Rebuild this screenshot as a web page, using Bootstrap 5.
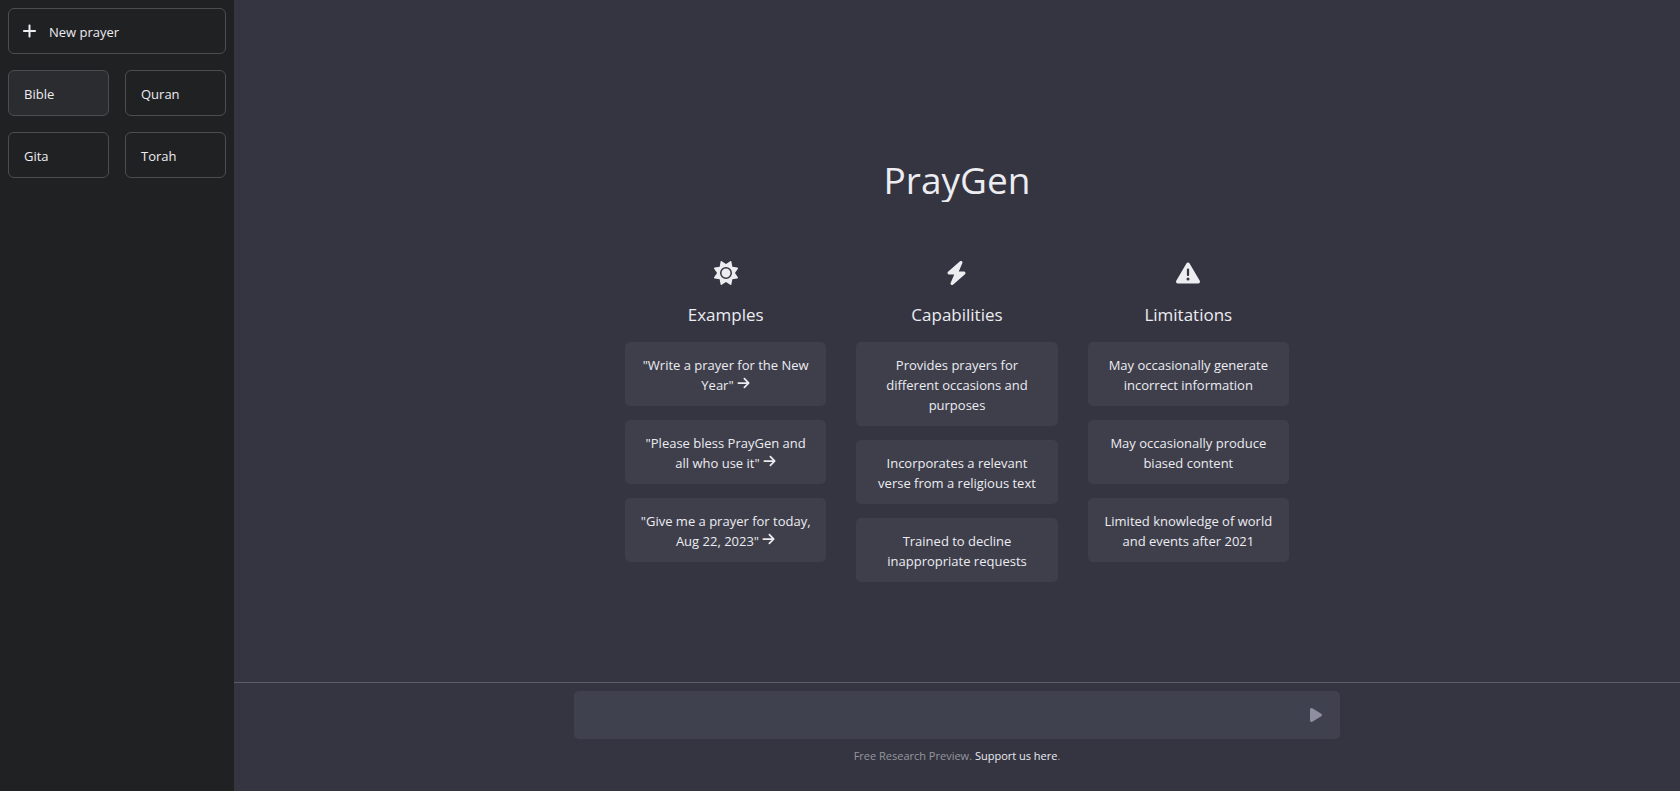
<!DOCTYPE html>
<html lang="en">
<head>
<meta charset="utf-8">
<meta name="viewport" content="width=device-width, initial-scale=1">
<title>PrayGen</title>
<link href="https://cdn.jsdelivr.net/npm/bootstrap@5.3.0/dist/css/bootstrap.min.css" rel="stylesheet">
<style>
  body { background: #343541; color: #ececf1; font-family: "Segoe UI", "Open Sans", sans-serif; font-size: 13px; line-height: 20px; }
  .sidebar { width: 234px; background: #202123; }
  .side-btn { --bs-btn-color: #ececf1; --bs-btn-border-color: #4d4d4f; --bs-btn-hover-color: #fff; --bs-btn-hover-bg: #2a2b32; --bs-btn-hover-border-color: #4d4d4f; --bs-btn-active-color: #ececf1; --bs-btn-active-bg: #2b2c30; --bs-btn-active-border-color: #4d4d4f; --bs-btn-border-radius: 6px; --bs-btn-font-size: 13px; --bs-btn-line-height: 20px; --bs-btn-padding-x: 15px; padding-top: 13px; padding-bottom: 11px; text-align: left; }
  .side-grid { display: grid; grid-template-columns: 1fr 1fr; gap: 16px; }
  .new-prayer { --bs-btn-padding-x: 14px; grid-column: span 2; gap: 13px; }
  .new-prayer svg { margin-bottom: 2px; }
  .welcome { max-width: 664px; padding-top: 162px; }
  .brand-title { font-size: 37px; height: 40px; line-height: 36px; margin-bottom: 59px; overflow: hidden; font-weight: 400; }
  .topics { display: grid; grid-template-columns: repeat(3, 1fr); gap: 30px; }
  .topic-title { font-size: 17px; line-height: 28px; font-weight: 400; margin: 16px 0 13px; }
  .tile { background: #3e3f4b; color: #ececf1; border: 0; border-radius: 5px; padding: 13px 14px 11px; text-align: center; }
  .tile svg { vertical-align: baseline; }
  .tile-stack { display: grid; gap: 14px; }
  .composer { border-top: 1px solid #5c5d67; padding: 8px 16px 10px; }
  .prompt-box { max-width: 766px; }
  .prompt-box .form-control { height: 48px; background: #40414f; border: 0; border-radius: 5px; color: #fff; padding: 12px 48px 12px 16px; }
  .send-btn { color: #8e8ea0; }
  .fine-print { font-size: 11px; line-height: 18px; color: #95959f; }
  .fine-print a { color: #ececf1; }
  svg { fill: currentColor; }
</style>
</head>
<body>
<div class="d-flex min-vh-100">
  <nav class="sidebar flex-shrink-0 p-2" aria-label="Prayers">
    <div class="side-grid">
      <button type="button" class="btn side-btn new-prayer d-flex align-items-center">
        <svg width="13" height="14" viewBox="16 36 416 440" aria-hidden="true"><path d="M256 80c0-17.700-14.300-32-32-32s-32 14.300-32 32V224H48c-17.700 0-32 14.300-32 32s14.300 32 32 32H192V432c0 17.700 14.300 32 32 32s32-14.300 32-32V288H400c17.700 0 32-14.300 32-32s-14.300-32-32-32H256V80z"/></svg>
        New prayer
      </button>
      <button type="button" class="btn side-btn active">Bible</button>
      <button type="button" class="btn side-btn">Quran</button>
      <button type="button" class="btn side-btn">Gita</button>
      <button type="button" class="btn side-btn">Torah</button>
    </div>
  </nav>

  <main class="flex-grow-1 d-flex flex-column">
    <section class="welcome flex-grow-1 w-100 mx-auto text-center">
      <h1 class="brand-title">PrayGen</h1>
      <div class="topics">
        <div>
          <svg class="d-block mx-auto" width="24" height="24" viewBox="0 0 512 512" aria-hidden="true"><path d="M361.5 1.200c5 2.100 8.600 6.600 9.600 11.900L391 121l107.900 19.800c5.300 1 9.800 4.600 11.900 9.600s1.500 10.700-1.600 15.200L446.900 256l62.300 90.300c3.100 4.500 3.700 10.200 1.600 15.200s-6.600 8.600-11.900 9.600L391 391 371.100 498.900c-1 5.300-4.600 9.800-9.600 11.900s-10.700 1.500-15.200-1.600L256 446.900l-90.300 62.300c-4.500 3.100-10.200 3.700-15.200 1.600s-8.600-6.600-9.600-11.900L121 391 13.100 371.100c-5.300-1-9.800-4.600-11.900-9.600s-1.500-10.700 1.600-15.200L65.100 256 2.800 165.700c-3.100-4.500-3.700-10.200-1.600-15.200s6.600-8.600 11.900-9.600L121 121 140.900 13.100c1-5.300 4.600-9.800 9.600-11.900s10.700-1.500 15.200 1.600L256 65.100 346.300 2.800c4.500-3.100 10.200-3.700 15.200-1.600zM160 256a96 96 0 1 1 192 0 96 96 0 1 1 -192 0zm224 0a128 128 0 1 0 -256 0 128 128 0 1 0 256 0z"/></svg>
          <h2 class="topic-title">Examples</h2>
          <div class="tile-stack">
            <button type="button" class="tile">"Write a prayer for the New Year" <svg width="13" height="14" viewBox="0 0 448 512" aria-hidden="true"><use href="#arrow"/></svg></button>
            <button type="button" class="tile">"Please bless PrayGen and all&nbsp;who use it" <svg width="13" height="14" viewBox="0 0 448 512" aria-hidden="true"><use href="#arrow"/></svg></button>
            <button type="button" class="tile">"Give me a prayer for today, Aug 22, 2023" <svg width="13" height="14" viewBox="0 0 448 512" aria-hidden="true"><use href="#arrow"/></svg></button>
          </div>
        </div>
        <div>
          <svg class="d-block mx-auto" width="21" height="24" viewBox="0 0 448 512" aria-hidden="true"><path d="M349.400 44.600c5.900-13.700 1.500-29.700-10.600-38.500s-28.600-8-39.900 1.800l-256 224c-10 8.800-13.600 22.900-8.900 35.300S50.700 288 64 288H175.500L98.600 467.400c-5.900 13.700-1.500 29.700 10.600 38.500s28.600 8 39.900-1.800l256-224c10-8.800 13.600-22.900 8.900-35.300s-16.600-20.700-30-20.700H272.500L349.400 44.600z"/></svg>
          <h2 class="topic-title">Capabilities</h2>
          <div class="tile-stack">
            <div class="tile">Provides prayers for different occasions and purposes</div>
            <div class="tile">Incorporates a relevant verse from a religious text</div>
            <div class="tile">Trained to decline inappropriate requests</div>
          </div>
        </div>
        <div>
          <svg class="d-block mx-auto" width="24" height="24" viewBox="0 0 512 512" aria-hidden="true"><path d="M256 32c14.200 0 27.300 7.500 34.500 19.800l216 368c7.300 12.400 7.300 27.700 .2 40.100S486.300 480 472 480H40c-14.300 0-27.600-7.700-34.700-20.100s-7-27.800 .2-40.100l216-368C228.700 39.500 241.800 32 256 32zm0 128c-13.300 0-24 10.700-24 24V296c0 13.300 10.700 24 24 24s24-10.700 24-24V184c0-13.300-10.700-24-24-24zm32 224a32 32 0 1 0 -64 0 32 32 0 1 0 64 0z"/></svg>
          <h2 class="topic-title">Limitations</h2>
          <div class="tile-stack">
            <div class="tile">May occasionally generate incorrect information</div>
            <div class="tile">May occasionally produce biased content</div>
            <div class="tile">Limited knowledge of world and events after 2021</div>
          </div>
        </div>
      </div>
    </section>

    <footer class="composer">
      <form class="prompt-box mx-auto position-relative">
        <input type="text" class="form-control" aria-label="Prayer request">
        <button type="button" class="btn send-btn position-absolute top-0 end-0 h-100 border-0 d-flex align-items-center px-3" aria-label="Send">
          <svg width="14" height="16" viewBox="0 0 448 512" aria-hidden="true"><path d="M73 39c-14.800-9.100-33.400-9.400-48.500-.9S0 62.600 0 80V432c0 17.400 9.400 33.400 24.500 41.900s33.700 8.100 48.500-.9L361 297c14.300-8.700 23-24.200 23-41s-8.700-32.200-23-41L73 39z"/></svg>
        </button>
      </form>
      <p class="fine-print text-center mt-2 mb-3">Free Research Preview. <a href="#" class="text-decoration-none">Support us here</a>.</p>
    </footer>
  </main>
</div>
<svg class="d-none" aria-hidden="true"><defs><path id="arrow" d="M438.600 278.600c12.500-12.500 12.500-32.800 0-45.300l-160-160c-12.500-12.500-32.800-12.500-45.300 0s-12.500 32.800 0 45.300L338.800 224 32 224c-17.700 0-32 14.300-32 32s14.300 32 32 32l306.700 0L233.400 393.400c-12.500 12.500-12.500 32.800 0 45.300s32.800 12.500 45.300 0l160-160z"/></defs></svg>
<script src="https://cdn.jsdelivr.net/npm/bootstrap@5.3.0/dist/js/bootstrap.bundle.min.js"></script>
</body>
</html>
